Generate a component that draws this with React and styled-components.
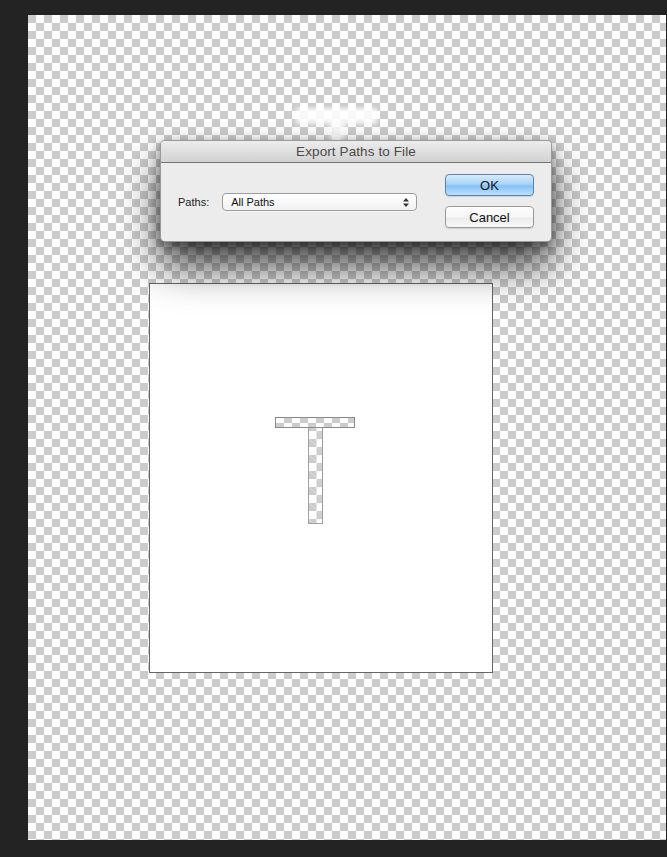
import React from "react";
import styled, { createGlobalStyle } from "styled-components";

const GlobalStyle = createGlobalStyle`
  html, body {
    margin: 0;
    padding: 0;
    background: #232323;
    font-family: "Liberation Sans", Arial, sans-serif;
  }
`;

// checker aligned to the page so the transparent letter lines up with it
const checker = `
  background-color: #fff;
  background-image:
    linear-gradient(45deg, #cccccc 25%, transparent 25%, transparent 75%, #cccccc 75%),
    linear-gradient(45deg, #cccccc 25%, transparent 25%, transparent 75%, #cccccc 75%);
  background-size: 16px 16px;
  background-position: 36px 15px, 28px 23px;
  background-attachment: fixed;
`;

const Canvas = styled.div`
  position: relative;
  margin: 15px 1px 0 28px;
  height: 825px;
  padding: 268px 0 0 121px;
  box-sizing: border-box;
  overflow: hidden;
  ${checker}
`;

const Document = styled.div`
  box-sizing: border-box;
  width: 344px;
  height: 390px;
  padding: 133px 0 0 125px;
  background: #fff;
  border: 1px solid #666;
`;

const Letter = styled.div`
  display: flex;
  flex-direction: column;
  align-items: center;
  width: 80px;
`;

const LetterBar = styled.div`
  box-sizing: border-box;
  width: 80px;
  height: 11px;
  border: 1px solid #8a8a8a;
  ${checker}
`;

const LetterStem = styled.div`
  box-sizing: border-box;
  width: 15px;
  height: 96px;
  border: 1px solid #a0a0a0;
  border-top: none;
  ${checker}
`;

const Ghost = styled.div`
  position: absolute;
  left: ${({ x }) => x}px;
  top: ${({ y }) => y}px;
  width: ${({ w }) => w}px;
  height: ${({ h }) => h}px;
  background: rgba(255, 255, 255, 0.85);
  filter: blur(2px);
`;

const Sheet = styled.div`
  position: absolute;
  left: 132px;
  top: 125px;
  width: 390px;
  height: 100px;
  border: 1px solid rgba(0, 0, 0, 0.35);
  border-radius: 5px;
  background: #ececec;
  box-shadow: 0 24px 40px rgba(0, 0, 0, 0.72), 0 4px 12px rgba(0, 0, 0, 0.4);
  overflow: hidden;
`;

const TitleBar = styled.div`
  height: 21px;
  border-bottom: 1px solid #747474;
  background: linear-gradient(#ececec, #d2d2d2);
  display: flex;
  align-items: center;
  justify-content: center;
  color: #4a4a4a;
  font-size: 13.5px;
  letter-spacing: 0.1px;
`;

const Body = styled.div`
  display: flex;
  align-items: center;
  justify-content: space-between;
  padding: 11px 17px 0 17px;
`;

const Field = styled.div`
  display: flex;
  align-items: center;
  gap: 13px;
  margin-top: 2px;
`;

const Label = styled.span`
  font-size: 11px;
  color: #222;
`;

const Select = styled.div`
  position: relative;
  box-sizing: border-box;
  width: 195px;
  height: 18px;
  padding-left: 8px;
  display: flex;
  align-items: center;
  font-size: 11px;
  color: #111;
  border: 1px solid #9c9c9c;
  border-radius: 4px;
  background: linear-gradient(#ffffff, #f1f1f1);
  box-shadow: 0 1px 0 rgba(255, 255, 255, 0.6);
`;

const Arrows = styled.svg`
  position: absolute;
  right: 7px;
  top: 4px;
`;

const Buttons = styled.div`
  display: flex;
  flex-direction: column;
  gap: 10px;
`;

const Button = styled.div`
  box-sizing: border-box;
  width: 89px;
  height: 22px;
  display: flex;
  align-items: center;
  justify-content: center;
  font-size: 13px;
  color: #111;
  border-radius: 4px;
  border: 1px solid ${({ primary }) => (primary ? "#5f82a8" : "#9a9a9a")};
  background: ${({ primary }) =>
    primary
      ? "linear-gradient(#d5ebfd 0%, #a9d4fa 45%, #86c1f5 55%, #bde0fc 100%)"
      : "linear-gradient(#ffffff 0%, #f6f6f6 50%, #ececec 55%, #f8f8f8 100%)"};
  box-shadow: 0 1px 1px rgba(0, 0, 0, 0.12);
`;

export default function App() {
  return (
    <>
      <GlobalStyle />
      <Canvas>
        <Ghost x={268} y={93} w={81} h={16} />
        <Ghost x={302} y={106} w={15} h={20} />
        <Document>
          <Letter>
            <LetterBar />
            <LetterStem />
          </Letter>
        </Document>
        <Sheet>
          <TitleBar>Export Paths to File</TitleBar>
          <Body>
            <Field>
              <Label>Paths:</Label>
              <Select>
                All Paths
                <Arrows width="6" height="9" viewBox="0 0 6 9">
                  <path d="M3 0 L6 3.5 H0 Z M3 9 L6 5.5 H0 Z" fill="#333" />
                </Arrows>
              </Select>
            </Field>
            <Buttons>
              <Button primary>OK</Button>
              <Button>Cancel</Button>
            </Buttons>
          </Body>
        </Sheet>
      </Canvas>
    </>
  );
}
